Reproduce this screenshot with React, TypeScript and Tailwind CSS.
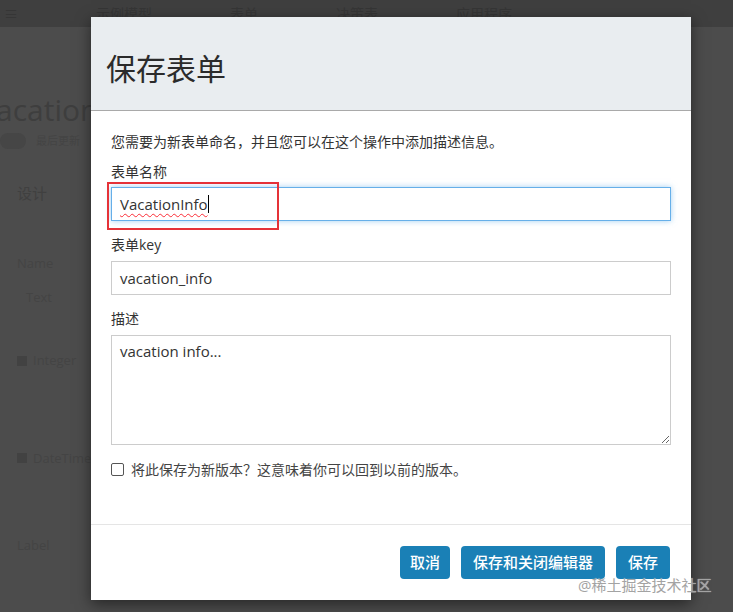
import React from "react"

const font = { fontFamily: '"Open Sans", "Noto Sans CJK SC", sans-serif' }

function Background() {
    return (
        <div className="absolute inset-0 flex flex-col bg-[#4c4c4c] text-[#444]">
            {/* top nav, dimmed */}
            <div className="flex h-[27px] items-center gap-[78px] bg-[#3f3f3f] pl-[4px] text-[14px] text-[#363636]">
                <span>≡</span>
                <span>示例模型</span>
                <span>表单</span>
                <span>决策表</span>
                <span>应用程序</span>
            </div>
            <div className="flex flex-col">
                <div className="ml-[-4px] mt-[68px] w-[95px] overflow-hidden whitespace-nowrap text-[30px] leading-none text-[#3e3e3e]">acationIn</div>
                <div className="mt-[8px] flex items-center gap-[10px]">
                    <span className="h-[16px] w-[26px] rounded-full bg-[#464646]" />
                    <span className="text-[11px]">最后更新</span>
                </div>
                <div className="ml-[17px] mt-[32px] text-[15px] text-[#404040]">设计</div>
                <div className="ml-[17px] mt-[50px] text-[13px]">Name</div>
                <div className="ml-[26px] mt-[14px] text-[13px]">Text</div>
                <div className="ml-[17px] mt-[44px] flex items-center gap-[6px] text-[13px]">
                    <span className="h-[10px] w-[10px] bg-[#424242]" />Integer
                </div>
                <div className="ml-[17px] mt-[78px] flex items-center gap-[6px] text-[13px]">
                    <span className="h-[10px] w-[10px] bg-[#424242]" />DateTime
                </div>
                <div className="ml-[17px] mt-[68px] text-[13px]">Label</div>
            </div>
        </div>
    )
}

export default function App() {
    return (
        <div className="relative h-[612px] w-[733px] overflow-hidden" style={font}>
            <Background />

            {/* Modal */}
            <div className="absolute left-[91px] top-[17px] flex h-[583px] w-[600px] flex-col bg-white text-[#333] shadow-[0_4px_14px_rgba(0,0,0,0.5)]">
                <div className="flex h-[94px] items-center border-b border-[#a9a9a9] bg-[#e9edf0] pl-[15px] pt-[10px]">
                    <h1 className="text-[30px] font-normal leading-none text-[#2b2b2b]">保存表单</h1>
                </div>

                <div className="flex flex-col px-[20px] pt-[21px] text-[14px]">
                    <p className="leading-[20px]">您需要为新表单命名，并且您可以在这个操作中添加描述信息。</p>

                    <label className="mt-[10px] leading-[20px]">表单名称</label>
                    <div className="mt-[5px] flex h-[34px] items-center border border-[#66afe9] px-[8px] text-[15px] shadow-[0_0_6px_rgba(102,175,233,0.6)]">
                        <span className="underline decoration-red-500 decoration-wavy decoration-1 underline-offset-[3px]">VacationInfo</span>
                        <span className="h-[18px] w-px bg-black" />
                    </div>

                    <label className="mt-[14px] leading-[20px]">表单key</label>
                    <div className="mt-[6px] flex h-[34px] items-center border border-[#ccc] px-[8px] text-[15px]">
                        vacation_info
                    </div>

                    <label className="mt-[14px] leading-[20px]">描述</label>
                    <textarea
                        readOnly
                        defaultValue="vacation info..."
                        className="mt-[6px] h-[110px] resize-y border border-[#ccc] px-[8px] py-[4px] text-[15px] text-[#333] outline-none"
                        style={font}
                    />

                    <div className="mt-[14px] flex items-center gap-[7px]">
                        <span className="h-[13px] w-[13px] rounded-[2px] border border-[#555] bg-white" />
                        <span className="text-[14px] text-[#444]">将此保存为新版本？这意味着你可以回到以前的版本。</span>
                    </div>
                </div>

                <div className="mt-auto flex h-[76px] items-start justify-end gap-[11px] border-t border-[#e5e5e5] pr-[21px] pt-[21px]">
                    <button className="h-[33px] w-[50px] rounded-[4px] bg-[#1a80b6] text-[15px] font-medium text-white">取消</button>
                    <button className="h-[33px] w-[144px] rounded-[4px] bg-[#1a80b6] text-[15px] font-medium text-white">保存和关闭编辑器</button>
                    <button className="h-[33px] w-[54px] rounded-[4px] bg-[#1a80b6] text-[15px] font-medium text-white">保存</button>
                </div>
            </div>

            {/* red annotation box */}
            <div className="absolute left-[107px] top-[182px] h-[48px] w-[172px] border-[2px] border-[#e53238]" />

            {/* watermark */}
            <div className="absolute left-[578px] top-[574px] z-10 text-[15px] text-[#a3a3a3] [text-shadow:0_0_1px_rgba(255,255,255,0.8)]">@稀土掘金技术社区</div>
        </div>
    )
}
